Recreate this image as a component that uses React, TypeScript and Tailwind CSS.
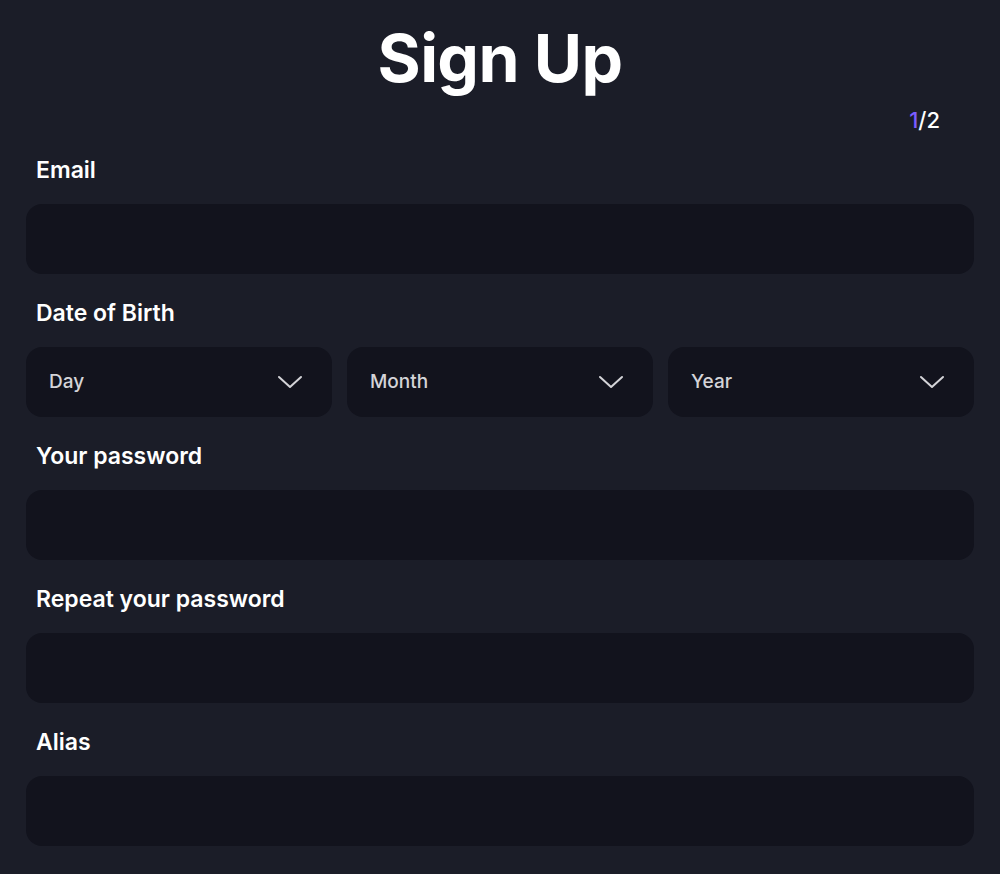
const inputCls = "block w-full h-[70px] rounded-2xl bg-[#12131d] px-5 text-lg text-white outline-none";

function Label({ children }: { children: string }) {
  return <label className="block px-[10px] text-[23px] font-semibold leading-[28px] text-white">{children}</label>;
}

function Select({ placeholder }: { placeholder: string }) {
  return (
    <div className="flex h-[70px] items-center justify-between rounded-2xl bg-[#12131d] pl-[23px] pr-[29px]">
      <span className="text-[19px] font-medium text-[#d4d4d8]">{placeholder}</span>
      <svg width="26" height="14" viewBox="0 0 26 14" fill="none" className="text-[#d4d4d8]">
        <path d="M2 2l11 10 11-10" stroke="currentColor" strokeWidth="2" strokeLinecap="round" strokeLinejoin="round" />
      </svg>
    </div>
  );
}

export default function App() {
  return (
    <div className="min-h-[874px] bg-[#1b1d28] px-[26px] pt-[14px] text-white" style={{ fontFamily: "Inter, 'Noto Sans', sans-serif" }}>
      <h1 className="text-center text-[66px] font-bold leading-[88px] tracking-[-0.01em]">Sign Up</h1>
      <div className="mt-[3px] flex justify-end pr-[34px] text-[22px] font-medium leading-[30px]">
        <span className="text-[#7c5cff]">1</span>/2
      </div>

      <div className="mt-[21px]">
        <Label>Email</Label>
        <input className={`${inputCls} mt-5`} />
      </div>

      <div className="mt-[25px]">
        <Label>Date of Birth</Label>
        <div className="mt-5 grid grid-cols-3 gap-[15px]">
          <Select placeholder="Day" />
          <Select placeholder="Month" />
          <Select placeholder="Year" />
        </div>
      </div>

      <div className="mt-[25px]">
        <Label>Your password</Label>
        <input type="password" className={`${inputCls} mt-5`} />
      </div>

      <div className="mt-[25px]">
        <Label>Repeat your password</Label>
        <input type="password" className={`${inputCls} mt-5`} />
      </div>

      <div className="mt-[25px]">
        <Label>Alias</Label>
        <input className={`${inputCls} mt-5`} />
      </div>
    </div>
  );
}
